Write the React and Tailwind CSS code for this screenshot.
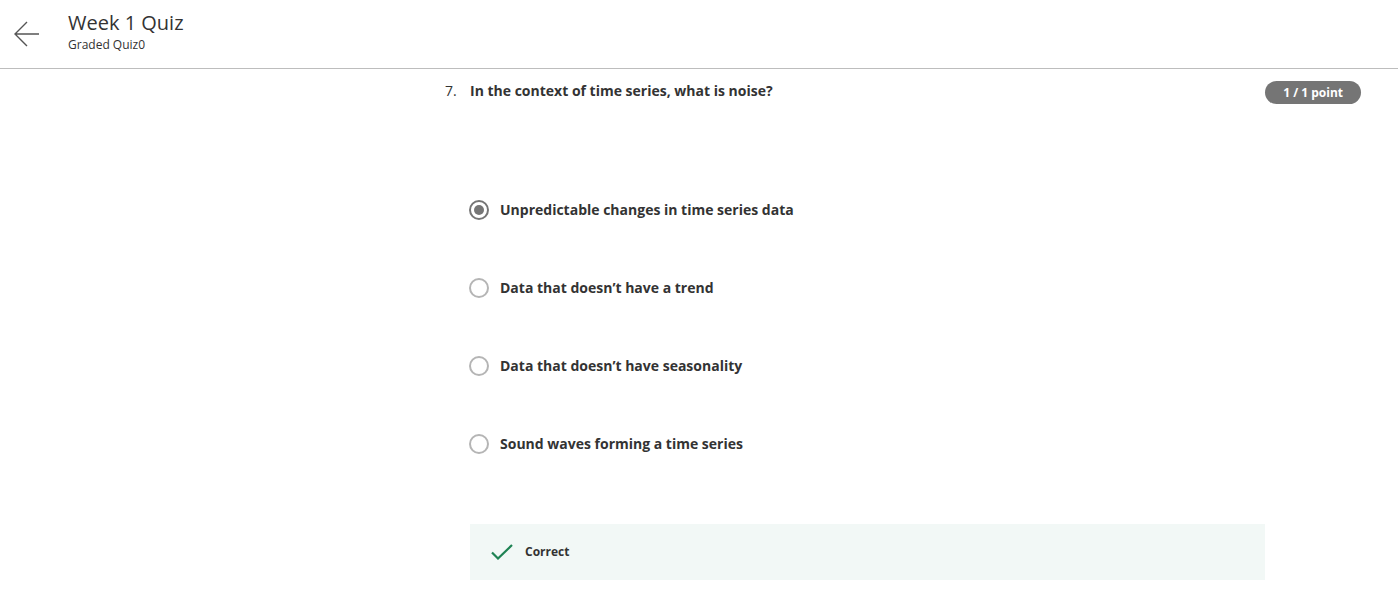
import React from 'react';

const options = [
  'Unpredictable changes in time series data',
  'Data that doesn\u2019t have a trend',
  'Data that doesn\u2019t have seasonality',
  'Sound waves forming a time series',
];

const Radio = ({ checked }) => (
  <span
    className={`flex h-5 w-5 shrink-0 items-center justify-center rounded-full border-2 ${
      checked ? 'border-[#757575]' : 'border-[#b5b5b5]'
    }`}
  >
    {checked && <span className="h-[10px] w-[10px] rounded-full bg-[#757575]" />}
  </span>
);

export default function App() {
  return (
    <div className="min-h-screen bg-white text-[#333] font-['Open_Sans',sans-serif]">
      {/* Header */}
      <header className="flex h-[69px] items-start border-b border-[#bdbdbd]">
        <button className="ml-[12px] mt-[19px] p-[2px] text-[#555]">
          <svg width="26" height="26" viewBox="0 0 26 26" fill="none" stroke="currentColor" strokeWidth="1.4">
            <path d="M25 13H2M13 1L1 13l12 12" />
          </svg>
        </button>
        <div className="ml-[26px] mt-[9px] flex flex-col">
          <h1 className="text-[20px] leading-[27px] text-[#333]">Week 1 Quiz</h1>
          <p className="mt-[1px] text-[12px] leading-[16px] text-[#333]">Graded Quiz0</p>
        </div>
      </header>

      {/* Question */}
      <div className="ml-[445px] mr-[37px] pt-[12px]">
        <div className="flex items-start justify-between">
          <div className="flex text-[14px] leading-[20px]">
            <span className="w-[25px]">7.</span>
            <span className="font-bold">In the context of time series, what is noise?</span>
          </div>
          <span className="rounded-full bg-[#757575] px-[18px] text-[12px] font-bold leading-[23px] text-white">
            1 / 1 point
          </span>
        </div>

        <div className="ml-[24px] mt-[96px] flex flex-col gap-[58px]">
          {options.map((o, i) => (
            <label key={o} className="flex h-5 items-center gap-[11px]">
              <Radio checked={i === 0} />
              <span className="text-[14px] font-bold leading-[20px] text-[#333]">{o}</span>
            </label>
          ))}
        </div>

        <div className="ml-[25px] mt-[70px] flex h-[56px] w-[795px] items-center bg-[#f2f8f6] pl-[21px]">
          <svg width="22" height="16" viewBox="0 0 22 16" fill="none" stroke="#1f8354" strokeWidth="2.2">
            <path d="M1 8.5l6 6L21 1" />
          </svg>
          <span className="ml-[12px] text-[12px] font-bold text-[#333]">Correct</span>
        </div>
      </div>
    </div>
  );
}
